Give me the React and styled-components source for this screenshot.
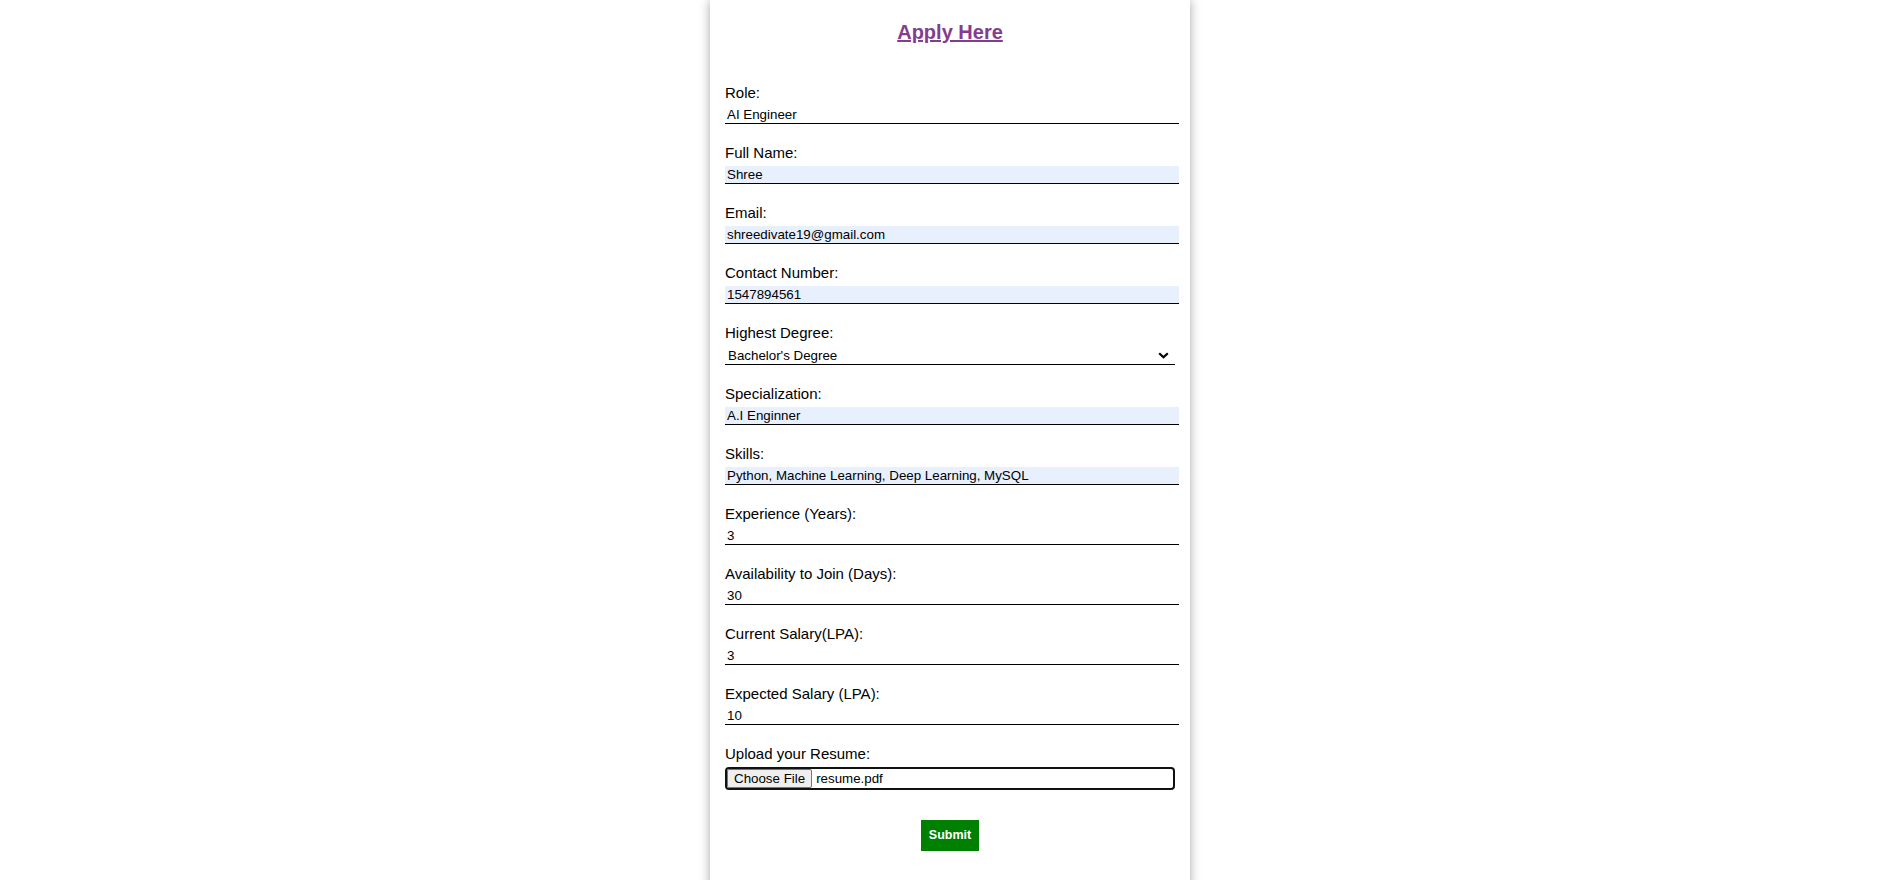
import React, {useState} from 'react';
import styled, {createGlobalStyle} from "styled-components";

const GlobalStyle = createGlobalStyle`
  html, body {
    margin: 0;
    padding: 0;
    background: #fff;
    font-family: "Liberation Sans", Arial, sans-serif;
  }
`

const Page = styled.div`
  display: flex;
  justify-content: center;
  padding-left: 10px;
`

const Card = styled.div`
  width: 480px;
  box-sizing: border-box;
  padding: 0 15px 40px;
  background: #fff;
  box-shadow: 0 0 10px rgba(0, 0, 0, 0.35);
`

const Title = styled.h2`
  margin: 21px 0 40px;
  text-align: center;
  font-size: 20px;
  font-weight: bold;
  line-height: 23px;
  color: #843c8f;
  text-decoration: underline;
`

const Field = styled.div`
  display: flex;
  flex-direction: column;
  align-items: flex-start;
  margin-bottom: 20px;
`

const Label = styled.label`
  font-size: 15px;
  line-height: 17px;
  color: #000;
  margin-bottom: 5px;
`

const Input = styled.input`
  box-sizing: content-box;
  width: 100%;
  height: 15px;
  padding: 1px 2px;
  margin: 0;
  border: none;
  border-bottom: 1px solid #000;
  border-radius: 0;
  outline: none;
  font-family: "Liberation Sans", Arial, sans-serif;
  font-size: 13.333px;
  line-height: 15px;
  color: #000;
  background: ${p => p.filled ? '#e8f0fe' : 'transparent'};
`

const SelectWrap = styled.div`
  position: relative;
  width: 100%;

  svg {
    position: absolute;
    right: 6px;
    top: 6px;
    pointer-events: none;
  }
`

const Select = styled.select`
  box-sizing: border-box;
  display: block;
  width: 100%;
  height: 19px;
  margin: 0;
  padding: 0 0 0 3px;
  border: none;
  border-bottom: 1px solid #000;
  border-radius: 0;
  outline: none;
  appearance: none;
  background: transparent;
  font-family: "Liberation Sans", Arial, sans-serif;
  font-size: 13.333px;
  color: #000;
`

const FileBox = styled.label`
  box-sizing: border-box;
  width: 100%;
  height: 23px;
  display: flex;
  align-items: center;
  border: 2px solid #111;
  border-radius: 4px;
  font-size: 13.333px;
  color: #000;
  overflow: hidden;
  cursor: pointer;

  input {
    display: none;
  }
`

const FileButton = styled.span`
  box-sizing: border-box;
  height: 100%;
  display: flex;
  align-items: center;
  padding: 0 6px;
  background: #efefef;
  border: 1px solid #767676;
  border-radius: 2px;
  margin-right: 4px;
`

const SubmitRow = styled.div`
  display: flex;
  justify-content: center;
  padding-top: 10px;
`

const SubmitButton = styled.button`
  border: none;
  background: #008000;
  color: #fff;
  font-family: "Liberation Sans", Arial, sans-serif;
  font-size: 12.5px;
  font-weight: bold;
  line-height: 15px;
  padding: 8px 8px;
  cursor: pointer;
`

const fields = [
  {key: 'role', label: 'Role:', value: 'AI Engineer', filled: false},
  {key: 'name', label: 'Full Name:', value: 'Shree', filled: true},
  {key: 'email', label: 'Email:', value: 'shreedivate19@gmail.com', filled: true},
  {key: 'phone', label: 'Contact Number:', value: '1547894561', filled: true},
]

const fields2 = [
  {key: 'spec', label: 'Specialization:', value: 'A.I Enginner', filled: true},
  {key: 'skills', label: 'Skills:', value: 'Python, Machine Learning, Deep Learning, MySQL', filled: true},
  {key: 'exp', label: 'Experience (Years):', value: '3', filled: false},
  {key: 'avail', label: 'Availability to Join (Days):', value: '30', filled: false},
  {key: 'cur', label: 'Current Salary(LPA):', value: '3', filled: false},
  {key: 'expSal', label: 'Expected Salary (LPA):', value: '10', filled: false},
]

const App = () => {
  let [values, setValues] = useState(() => {
    let v = {degree: "Bachelor's Degree"}
    ;[...fields, ...fields2].forEach(f => v[f.key] = f.value)
    return v
  })

  let renderField = (f) => (
    <Field key={f.key}>
      <Label htmlFor={f.key}>{f.label}</Label>
      <Input
        id={f.key}
        type="text"
        filled={f.filled ? 1 : 0}
        value={values[f.key]}
        onChange={(e) => setValues({...values, [f.key]: e.target.value})}
      />
    </Field>
  )

  return (
    <Page>
      <GlobalStyle/>
      <Card>
        <Title>Apply Here</Title>
        <form onSubmit={(e) => e.preventDefault()}>
          {fields.map(renderField)}
          <Field>
            <Label htmlFor="degree">Highest Degree:</Label>
            <SelectWrap>
              <Select
                id="degree"
                value={values.degree}
                onChange={(e) => setValues({...values, degree: e.target.value})}
              >
                <option>High School</option>
                <option>Bachelor's Degree</option>
                <option>Master's Degree</option>
                <option>PhD</option>
              </Select>
              <svg width="11" height="7" viewBox="0 0 11 7">
                <path d="M1.2 1.2 L5.5 5.3 L9.8 1.2" fill="none" stroke="#000" strokeWidth="2.2"/>
              </svg>
            </SelectWrap>
          </Field>
          {fields2.map(renderField)}
          <Field>
            <Label>Upload your Resume:</Label>
            <FileBox>
              <input type="file"/>
              <FileButton>Choose File</FileButton>
              <span>resume.pdf</span>
            </FileBox>
          </Field>
          <SubmitRow>
            <SubmitButton type="submit">Submit</SubmitButton>
          </SubmitRow>
        </form>
      </Card>
    </Page>
  );
};

export default App;
